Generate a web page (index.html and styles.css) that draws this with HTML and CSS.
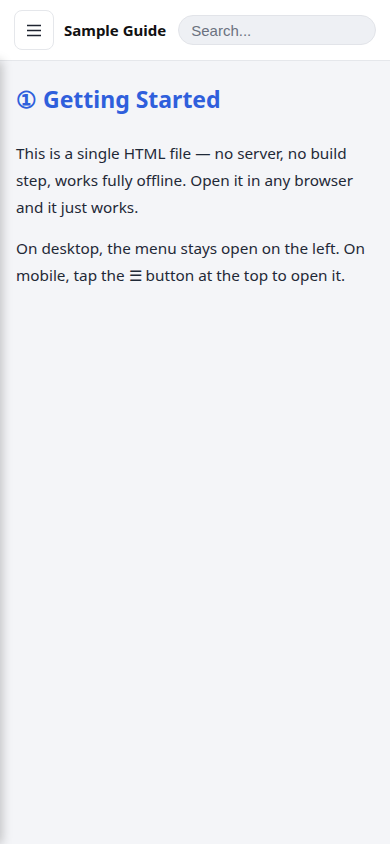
FILE: index.html
```html
<!DOCTYPE html>
<html lang="en">
<head>
<meta charset="utf-8">
<meta name="viewport" content="width=device-width, initial-scale=1">
<title>Sample Guide</title>
<link rel="stylesheet" href="styles.css">
</head>
<body>
<header class="topbar">
  <button class="menu-btn" aria-label="Menu">
    <svg class="menu-icon" width="16" height="14" viewBox="0 0 16 14" aria-hidden="true">
      <path d="M1 2.5H15M1 7.5H15M1 12.5H15" stroke="#1f2430" stroke-width="1.4" fill="none"/>
    </svg>
  </button>
  <span class="brand">Sample Guide</span>
  <input class="search" type="text" placeholder="Search...">
</header>
<aside class="sidebar"></aside>
<main class="content">
  <h1 class="title">① Getting Started</h1>
  <p>This is a single HTML file — no server, no build step, works fully offline. Open it in any browser and it just works.</p>
  <p>On desktop, the menu stays open on the left. On mobile, tap the ☰ button at the top to open it.</p>
</main>
</body>
</html>
```
FILE: styles.css
```css
* { box-sizing: border-box; }
html, body { margin: 0; padding: 0; }
body {
  font-family: "Noto Sans", "Open Sans", sans-serif;
  background: #f4f5f8;
  color: #1f2937;
  min-height: 100vh;
  overflow: hidden;
}
.topbar {
  height: 61px;
  background: #ffffff;
  border-bottom: 1px solid #e5e7eb;
  display: flex;
  align-items: center;
  padding: 0 14px;
  gap: 10px;
}
.menu-btn {
  width: 40px;
  height: 40px;
  border: 1px solid #e5e7eb;
  border-radius: 8px;
  background: #fff;
  padding: 0;
  display: flex;
  align-items: center;
  justify-content: center;
  flex: none;
}
.menu-icon { display: block; }
.brand {
  font-weight: 700;
  font-size: 15px;
  color: #111;
  white-space: nowrap;
  margin-right: 2px;
}
.search {
  flex: 1;
  height: 30px;
  border: 1px solid #e2e4e9;
  border-radius: 15px;
  background: #eef0f4;
  padding: 0 12px;
  font-family: "Liberation Sans", Arial, sans-serif;
  font-size: 15px;
  color: #333;
  min-width: 0;
}
.search::placeholder { color: #6b7280; }
.sidebar {
  position: fixed;
  top: 61px;
  bottom: 0;
  left: 0;
  width: 260px;
  background: #fff;
  transform: translateX(-100%);
  box-shadow: 2px 0 10px rgba(0,0,0,0.22);
}
.content {
  padding: 20px 16px;
}
.title {
  font-size: 23px;
  font-weight: 700;
  color: #2f5fdc;
  margin: 4px 0 25px;
  line-height: 1.3;
}
.content p {
  font-size: 15.3px;
  line-height: 27px;
  margin: 0 0 14px;
}
```
